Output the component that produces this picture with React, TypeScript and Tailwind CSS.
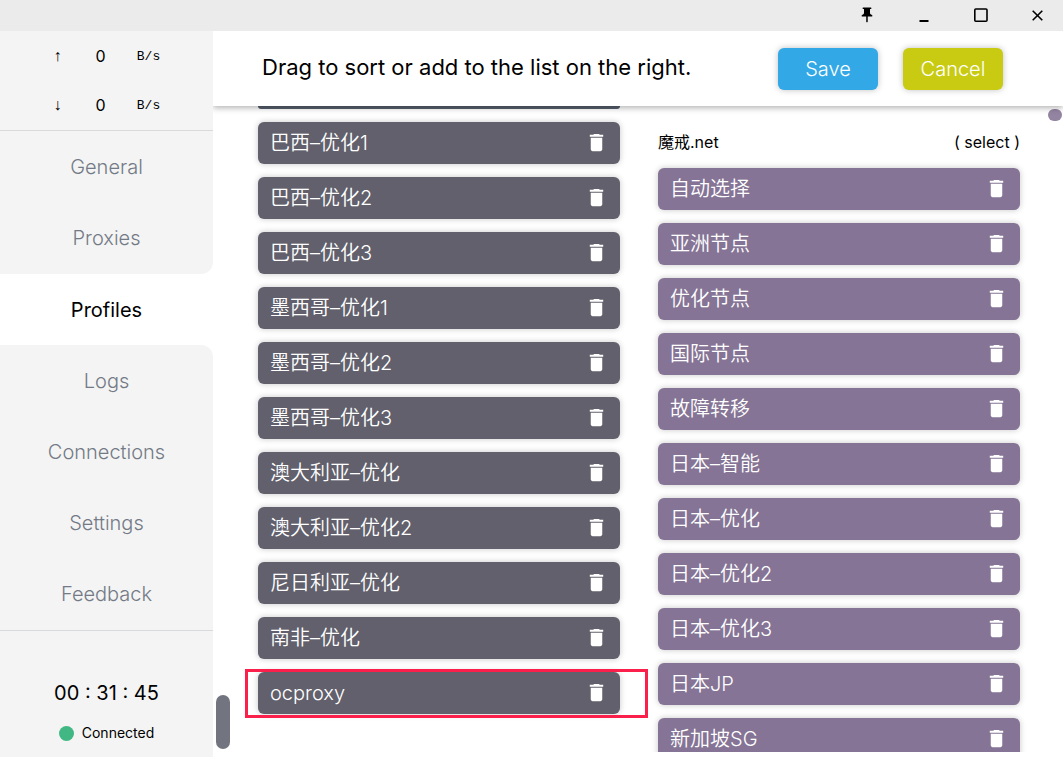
import React from "react";
import { MdDelete, MdPushPin } from "react-icons/md";

const proxies = [
  "巴西–优化1",
  "巴西–优化2",
  "巴西–优化3",
  "墨西哥–优化1",
  "墨西哥–优化2",
  "墨西哥–优化3",
  "澳大利亚–优化",
  "澳大利亚–优化2",
  "尼日利亚–优化",
  "南非–优化",
  "ocproxy",
];

const groups = [
  "自动选择",
  "亚洲节点",
  "优化节点",
  "国际节点",
  "故障转移",
  "日本–智能",
  "日本–优化",
  "日本–优化2",
  "日本–优化3",
  "日本JP",
  "新加坡SG",
];

function TitleBar() {
  const button = "flex h-full w-14 items-center justify-center";
  return (
    <header className="flex h-[31px] shrink-0 justify-end gap-px bg-[#ebebeb] pb-px text-black">
      <button aria-label="Pin window" className={button}>
        <MdPushPin size={18} />
      </button>
      <button aria-label="Minimize" className={button}>
        <svg width="16" height="16" viewBox="0 0 16 16">
          <path d="M3.5 14h9" stroke="currentColor" strokeWidth="2" />
        </svg>
      </button>
      <button aria-label="Maximize" className={button}>
        <svg width="16" height="16" viewBox="0 0 16 16" fill="none">
          <rect x="1.8" y="2" width="12.2" height="12.2" rx="1" stroke="currentColor" strokeWidth="1.6" />
        </svg>
      </button>
      <button aria-label="Close" className="flex h-full w-[53px] items-center justify-center">
        <svg width="16" height="16" viewBox="0 0 16 16">
          <path d="M3.7 3.7l9.6 9.6M13.3 3.7l-9.6 9.6" stroke="currentColor" strokeWidth="1.6" />
        </svg>
      </button>
    </header>
  );
}

function SpeedRow({ arrow }: { arrow: string }) {
  return (
    <div className="flex h-[49px] items-center justify-center pr-0.5 text-base font-normal">
      <span className="w-8 text-center font-['Liberation_Sans',sans-serif]">{arrow}</span>
      <span className="w-[54px] text-center">0</span>
      <span className="w-[42px] pt-0.5 text-center font-['Liberation_Mono',monospace] text-[13px]">B/s</span>
    </div>
  );
}

function NavLink({ label, active }: { label: string; active?: boolean }) {
  return (
    <a
      href={"#" + label.toLowerCase()}
      aria-current={active ? "page" : undefined}
      className={
        "flex h-[71px] items-center justify-center text-xl " +
        (active ? "font-normal text-black" : "text-[#737a86]")
      }
    >
      {label}
    </a>
  );
}

function Sidebar() {
  return (
    <aside className="flex w-[213px] shrink-0 flex-col text-black">
      <div className="h-[100px] border-b border-[#d9dadc] bg-[#f4f4f4]">
        <SpeedRow arrow="↑" />
        <SpeedRow arrow="↓" />
      </div>
      <nav>
        <div className="rounded-br-xl bg-[#f4f4f4] pb-px">
          <NavLink label="General" />
          <NavLink label="Proxies" />
        </div>
        <NavLink label="Profiles" active />
        <div className="rounded-tr-xl bg-[#f4f4f4] pb-px">
          <NavLink label="Logs" />
          <NavLink label="Connections" />
          <NavLink label="Settings" />
          <NavLink label="Feedback" />
        </div>
      </nav>
      <div className="flex flex-1 flex-col items-center border-t border-[#d9dadc] bg-[#f4f4f4] pt-12 font-normal">
        <p className="text-xl leading-7">00 : 31 : 45</p>
        <p className="mt-3.5 flex items-center gap-2 text-sm leading-6">
          <span className="size-[15px] rounded-full bg-[#41b883]" />
          Connected
        </p>
      </div>
    </aside>
  );
}

function Item({ label, color, marked }: { label: string; color: string; marked?: boolean }) {
  return (
    <li
      className={
        "relative flex h-[42px] shrink-0 items-center justify-between rounded-md px-3 text-xl text-white shadow-[0_0_6px_rgba(0,0,0,0.22)] " +
        color
      }
    >
      <span className="whitespace-nowrap">{label}</span>
      <button aria-label={"Delete " + label} className="pb-0.5">
        <MdDelete size={23} />
      </button>
      {marked && (
        <span className="pointer-events-none absolute -bottom-1 -left-[13px] -right-7 -top-[3px] border-3 border-[#fb1f4b]" />
      )}
    </li>
  );
}

export default function App() {
  return (
    <div className="flex h-screen flex-col overflow-hidden bg-white font-['Inter','Noto_Sans_CJK_SC',sans-serif] font-[350]">
      <TitleBar />
      <div className="flex min-h-0 flex-1">
        <Sidebar />
        <main className="flex min-w-0 flex-1 flex-col overflow-hidden pb-[5px]">
          <div className="z-10 flex h-[75px] shrink-0 items-center justify-between bg-white pl-[49px] pr-[60px] shadow-[0_2px_6px_rgba(0,0,0,0.3)]">
            <h1 className="whitespace-nowrap pb-0.5 text-[22px] font-normal text-black">
              Drag to sort or add to the list on the right.
            </h1>
            <div className="flex gap-[25px] text-xl text-white">
              <button className="h-[42px] w-[100px] rounded-md bg-[#32a8e6] shadow-[0_0_6px_rgba(0,0,0,0.25)]">
                Save
              </button>
              <button className="h-[42px] w-[100px] rounded-md bg-[#c8cb12] shadow-[0_0_6px_rgba(0,0,0,0.25)]">
                Cancel
              </button>
            </div>
          </div>
          <div className="flex min-h-0 flex-1 overflow-hidden">
            <div className="flex w-[45px] shrink-0 items-end pb-[3px] pl-[3px]">
              <div className="h-[54px] w-[14px] rounded-full bg-[#72757f]" />
            </div>
            <ul className="flex flex-1 flex-col gap-[13px]">
              <li aria-hidden="true" className="h-[3px] shrink-0 rounded-b-md bg-[#565f6d]" />
              {proxies.map((name) => (
                <Item key={name} label={name} color="bg-[#61606c]" marked={name === "ocproxy"} />
              ))}
            </ul>
            <section className="ml-[38px] flex-1">
              <h2 className="flex h-[62px] items-center justify-between pt-[9px] text-base font-normal text-black">
                <span>魔戒.net</span>
                <button>( select )</button>
              </h2>
              <ul className="flex flex-col gap-[13px]">
                {groups.map((name) => (
                  <Item key={name} label={name} color="bg-[#857495]" />
                ))}
              </ul>
            </section>
            <div className="flex w-[43px] shrink-0 items-start justify-end pr-px pt-[3px]">
              <div className="h-3 w-[14px] rounded-full bg-[#9384a2]" />
            </div>
          </div>
        </main>
      </div>
    </div>
  );
}
